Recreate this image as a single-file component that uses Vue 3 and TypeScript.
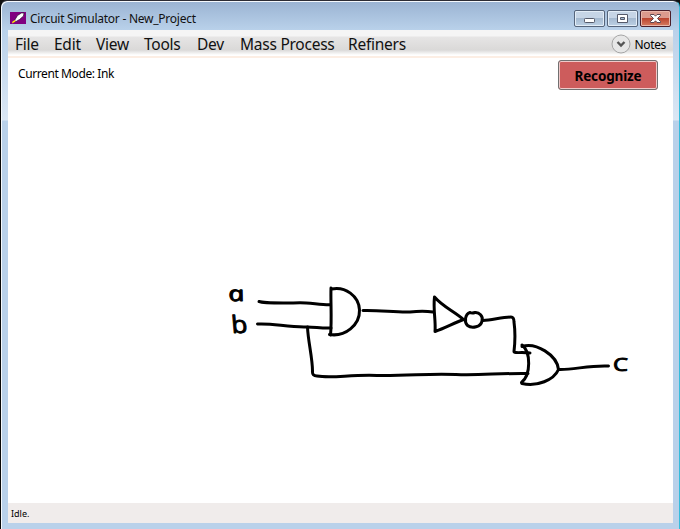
<script setup lang="ts">
interface MenuItem { label: string; width: number }
const menus: MenuItem[] = [
  { label: 'File', width: 39 },
  { label: 'Edit', width: 42 },
  { label: 'View', width: 48 },
  { label: 'Tools', width: 53 },
  { label: 'Dev', width: 43 },
  { label: 'Mass Process', width: 108 },
  { label: 'Refiners', width: 70 },
]
const strokes: string[] = [
  'M259 301.5 C264 303.5 281 303 300 302.8 C310 302.8 321 305 330 304.8',
  'M257.5 324 C272 323 286 327 304 327 C314 326.5 320 328.5 331 328',
  'M331 288 C330.5 301 332 320 330.5 335',
  'M331.5 289 C345 286 359 296 359.5 310 C360 325 345 337 329.5 334.5',
  'M307.5 327 C308 341 312.5 358 312.5 371 Q312 376 317 376 C332 378.5 350 374.5 377 375.5 C410 376 430 373 456 374.5 C480 375.5 500 373 528 373.5',
  'M363 310.5 C381 310 394 312.5 410 312 Q423 310.5 433 312',
  'M434.5 297 C433 310 436 321 435 331.5 C445 328 454 323 463.5 319.5 C454 311 443 307 434.5 297',
  'M470 312.5 C465 314 464 322 467.5 325.5 C472 329 481 327 482 321 C483.5 316 479 312 475 312.5 Q472 313.5 470 312.5',
  'M483 320.5 C492 320 503 317 511 317 Q514 317 514 322 C515.5 333 515 343 514 351.5 Q514 353 522 352.5 L530 353',
  'M522 345 C531 352 531 375 521.5 382.5',
  'M522 346.5 C536 342 557 355 558.5 369.5 C554 380 537 387 522 383.5',
  'M559 369.5 C573 370 590 365 608.5 366',
]
</script>

<template>
  <main class="window">
    <header class="titlebar">
      <svg class="app-icon" width="16" height="12" viewBox="0 0 16 12">
        <rect width="16" height="12" fill="#800080" />
        <path d="M4.5 8.5 L7.5 3.5 L11.5 1 L14 1 L13.5 4 L9.5 7.5 L6 9.5Z" fill="#fff" stroke="#16051b" stroke-width=".6" />
        <path d="M2 11.5 L2.5 9.5 L5 8 L5.5 9.5Z" fill="#ffe900" />
      </svg>
      <h1 class="title">Circuit Simulator - New_Project</h1>
      <div class="controls">
        <button class="control" aria-label="Minimize">
          <svg width="29" height="15" viewBox="0 0 29 15"><rect x="9.5" y="7.5" width="10" height="4" rx=".8" fill="#fff" stroke="#555a6a" /></svg>
        </button>
        <button class="control" aria-label="Maximize">
          <svg width="29" height="15" viewBox="0 0 29 15"><path d="M9.5 3.5h10v8h-10z M12.5 6.5v2h4v-2z" fill="#fff" fill-rule="evenodd" stroke="#555a6a" /></svg>
        </button>
        <button class="control close" aria-label="Close">
          <svg width="29" height="15" viewBox="0 0 29 15"><path d="M9.5 3.5h3.5l1.5 1.7 1.5-1.7h3.5v1l-3 3 3 3v1h-3.5l-1.5-1.7-1.5 1.7h-3.5v-1l3-3-3-3z" fill="#fff" stroke="#5d4650" /></svg>
        </button>
      </div>
    </header>
    <section class="client">
      <nav class="menubar">
        <span v-for="item in menus" :key="item.label" class="menu" :style="{ width: item.width + 'px' }">{{ item.label }}</span>
        <div class="notes">
          <svg width="20" height="20" viewBox="0 0 20 20"><circle cx="10" cy="10" r="9" fill="#e7e7e7" stroke="#a5a5a5" /><path d="M6.5 8 L10 11.5 L13.5 8" fill="none" stroke="#555" stroke-width="2.4" /></svg>
          <span>Notes</span>
        </div>
      </nav>
      <div class="workspace">
        <div class="toolbar">
          <span class="mode">Current Mode: Ink</span>
          <button class="recognize">Recognize</button>
        </div>
        <svg class="ink" width="665" height="405" viewBox="8 98 665 405">
          <g class="lines"><path v-for="(stroke, i) in strokes" :key="i" :d="stroke" /></g>
          <text class="letter slanted" transform="translate(230 301) skewX(17)" textLength="16" lengthAdjust="spacingAndGlyphs">a</text>
          <text class="letter b" transform="translate(232 333) skewX(5)" textLength="16" lengthAdjust="spacingAndGlyphs">b</text>
          <text class="letter c" x="613" y="370.5" textLength="15" lengthAdjust="spacingAndGlyphs">C</text>
        </svg>
      </div>
      <footer class="status">Idle.</footer>
    </section>
  </main>
</template>

<style>
body { margin: 0; overflow: hidden; background: #111; }
</style>
<style scoped>
* { box-sizing: border-box; }
.window { width: 680px; height: 529px; display: flex; flex-direction: column; border-top: 1px solid #2c2c34; border-left: 1px solid #080808; border-right: 1px solid #35bcdc; border-radius: 7px 7px 0 0; padding: 0 6px 6px 7px; background: linear-gradient(#9ab3d2 0, #b9d1ea 29px, #dbe7f4 119px, #b9d1ea 120px); box-shadow: inset 1px 1px 0 #f5f9fd; font-family: "Noto Sans", "Open Sans", sans-serif; color: #000; }
.titlebar { height: 29px; flex: none; display: flex; align-items: flex-start; padding: 11px 2px 0 2px; }
.app-icon { display: block; flex: none; }
.title { margin: -2px 0 0 4px; font-size: 12px; line-height: 17px; font-weight: 400; letter-spacing: -.25px; white-space: nowrap; color: #111; }
.controls { display: flex; gap: 2px; margin: -2px 0 0 auto; }
.control { width: 31px; height: 17px; padding: 0; border: 1px solid #56657b; border-radius: 2px; box-shadow: inset 0 0 0 1px #e3edf7; background: linear-gradient(#c6d5e6 0 45%, #a3b8cf 46%, #bdd1e5); }
.control svg { display: block; }
.close { border-color: #4b1e29; box-shadow: inset 0 0 0 1px #e9b7aa; background: linear-gradient(#dc9a8d 0 45%, #ba412c 46%, #d57c61); }
.client { flex: 1; min-height: 0; display: flex; flex-direction: column; background: #fff; }
.menubar { height: 28px; flex: none; display: flex; align-items: flex-start; padding-left: 7px; background: linear-gradient(#f5f5f5 0 6px, #e6e5e5 7px, #dad9d8 20px, #fff 25px 26px, #fceee4 26px); }
.menu { flex: none; font-size: 15.5px; line-height: 28px; letter-spacing: -.25px; white-space: nowrap; color: #111; }
.notes { display: flex; align-items: center; gap: 4px; margin: 4px 7px 0 auto; font-size: 12px; line-height: 20px; letter-spacing: -.35px; }
.notes span { position: relative; top: 1px; }
.notes svg { display: block; }
.workspace { flex: 1; min-height: 0; }
.toolbar { display: flex; justify-content: space-between; align-items: flex-start; height: 40px; padding: 2px 15px 0 10px; }
.mode { margin-top: 5px; font-size: 12px; line-height: 18px; letter-spacing: -.4px; }
.recognize { width: 100px; height: 30px; padding: 2px 0 0; border: 1px solid #707070; border-radius: 3px; box-shadow: inset 0 0 0 1px #f0c9c9; background: #cd5c5c; font: 700 13.5px/25px "Noto Sans", "Open Sans", sans-serif; letter-spacing: -.15px; color: #000; }
.ink { display: block; }
.lines { fill: none; stroke: #000; stroke-width: 3; stroke-linecap: round; stroke-linejoin: round; }
.letter { font: 21px "Open Sans", sans-serif; stroke: #000; stroke-width: .9; stroke-linejoin: round; }
.slanted { font-style: italic; }
.b { font-size: 24px; }
.c { font-size: 19px; }
.status { height: 20px; flex: none; padding-left: 3px; background: #f0eceb; font-size: 9px; line-height: 21px; }
</style>
